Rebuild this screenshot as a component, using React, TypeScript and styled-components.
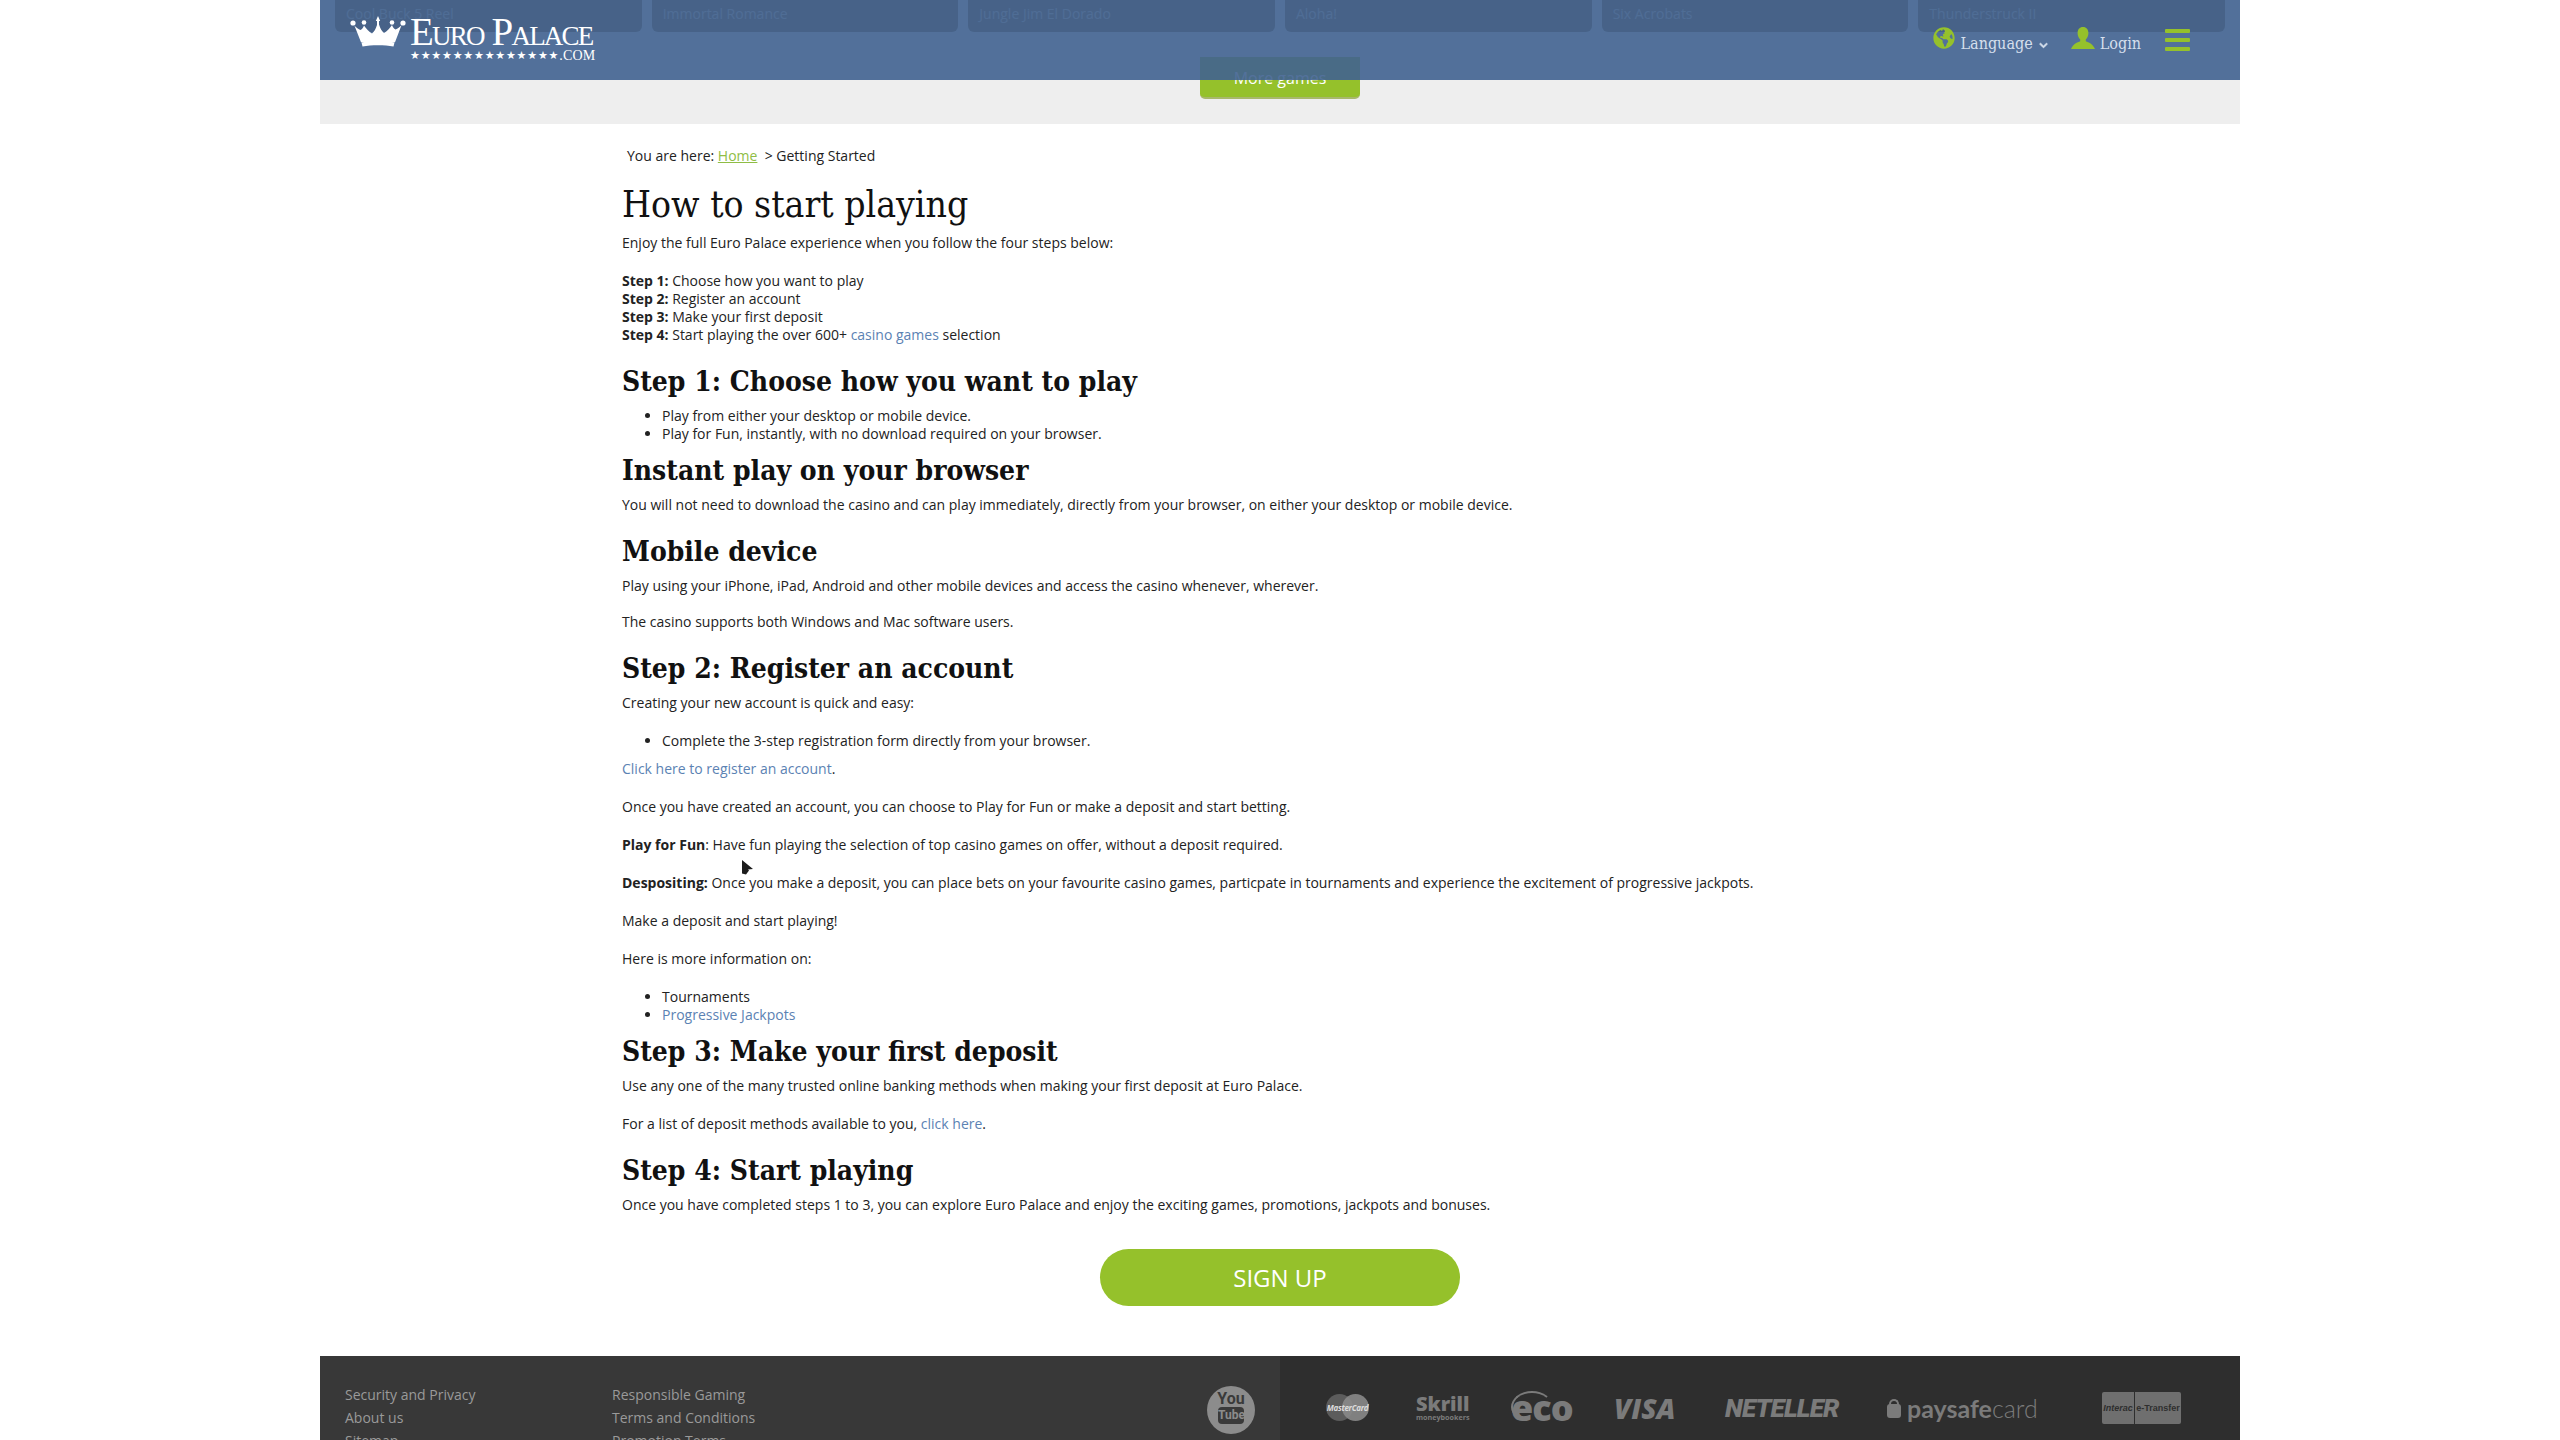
import styled, { createGlobalStyle } from "styled-components";
import { FaGlobeAmericas, FaChevronDown } from "react-icons/fa";

const GREEN = "#95c12b";
const SANS = `"Open Sans", "Noto Sans", sans-serif`;
const SLAB = `"DejaVu Serif Condensed", "DejaVu Serif", "Liberation Serif", serif`;

const games = [
  "Cool Buck 5 Reel",
  "Immortal Romance",
  "Jungle Jim El Dorado",
  "Aloha!",
  "Six Acrobats",
  "Thunderstruck II",
];

function Crown() {
  return (
    <svg width="56" height="31" viewBox="0 0 56 31" fill="#fff">
      <path d="M28 0l2.2 5H29v3.5c1.2 4 3 7 5 8.5 3-1.6 6-5 8-8 .8 2 1.8 3.6 3.5 4.5 2.2-.6 4.2-2.4 6-4.2l-6.5 17H11L4.500 9.800c1.800 1.800 3.800 3.600 6 4.200 1.700-.9 2.700-2.500 3.500-4.500 2 3 5 6.400 8 8 2-1.500 3.800-4.500 5-8.500V5h-1.200z" />
      <circle cx="3" cy="7" r="2.600" />
      <circle cx="53" cy="7" r="2.600" />
      <circle cx="14" cy="6.500" r="2.300" />
      <circle cx="42" cy="6.500" r="2.300" />
      <path d="M11.500 26.500c10-2.500 23-2.500 33 0L43.500 30.500c-9-1.800-22-1.800-31 0z" />
    </svg>
  );
}

function UserIcon() {
  return (
    <svg width="24" height="22" viewBox="0 0 24 22" fill={GREEN}>
      <path d="M12 0c3.400 0 5.400 2.600 5.400 6 0 2.700-1.100 5-2.600 6.400v1.800c2.800 1.200 7 2.500 9.200 7.800H0c2.200-5.300 6.400-6.600 9.200-7.800v-1.800C7.700 11 6.600 8.700 6.600 6 6.600 2.600 8.600 0 12 0z" />
    </svg>
  );
}

function Cursor() {
  return (
    <svg width="13" height="16" viewBox="0 0 13 16" fill="#1c1c1c">
      <path d="M1 0l11 9-5 .5 1 1-3 4-4-1z" />
    </svg>
  );
}

export default function App() {
  return (
    <>
      <GlobalStyle />
      <Page>
        <TopArea>
          <GameRow>
            {games.map(g => (
              <GameCard key={g}>{g}</GameCard>
            ))}
          </GameRow>
          <MoreButton>More games</MoreButton>
        </TopArea>

        <Header>
          <Logo>
            <Crown />
            <LogoText>
              <LogoName>Euro Palace</LogoName>
              <LogoLine>
                <LogoStars>★★★★★★★★★★★★★★</LogoStars>
                <LogoCom>.COM</LogoCom>
              </LogoLine>
            </LogoText>
          </Logo>
          <HeaderMenu>
            <MenuItem>
              <FaGlobeAmericas size={22} color={GREEN} />
              <MenuLabel>Language</MenuLabel>
              <FaChevronDown size={9} color="#d5dfec" stroke="#d5dfec" strokeWidth={40} />
            </MenuItem>
            <MenuItem>
              <UserIcon />
              <MenuLabel>Login</MenuLabel>
            </MenuItem>
            <Burger>
              <span />
              <span />
              <span />
            </Burger>
          </HeaderMenu>
        </Header>

        <Main>
          <Crumbs>
            You are here: <HomeLink>Home</HomeLink>&nbsp; &gt; Getting Started
          </Crumbs>
          <Title>How to start playing</Title>
          <Text>Enjoy the full Euro Palace experience when you follow the four steps below:</Text>
          <Text>
            <b>Step 1:</b> Choose how you want to play
            <br />
            <b>Step 2:</b> Register an account
            <br />
            <b>Step 3:</b> Make your first deposit
            <br />
            <b>Step 4:</b> Start playing the over 600+ <A>casino games</A> selection
          </Text>

          <Heading>Step 1: Choose how you want to play</Heading>
          <List>
            <li>Play from either your desktop or mobile device.</li>
            <li>Play for Fun, instantly, with no download required on your browser.</li>
          </List>

          <Heading>Instant play on your browser</Heading>
          <Text>
            You will not need to download the casino and can play immediately, directly from your browser, on either
            your desktop or mobile device.
          </Text>

          <Heading>Mobile device</Heading>
          <Text $tight>Play using your iPhone, iPad, Android and other mobile devices and access the casino whenever, wherever.</Text>
          <Text>The casino supports both Windows and Mac software users.</Text>

          <Heading>Step 2: Register an account</Heading>
          <Text>Creating your new account is quick and easy:</Text>
          <List>
            <li>Complete the 3-step registration form directly from your browser.</li>
          </List>
          <Text>
            <A>Click here to register an account</A>.
          </Text>
          <Text>Once you have created an account, you can choose to Play for Fun or make a deposit and start betting.</Text>
          <Text>
            <b>Play for Fun</b>: Have fun playing the selection of top casino games on offer, without a deposit required.
          </Text>
          <Text>
            <b>Despositing:</b> Once you make a deposit, you can place bets on your favourite casino games, particpate in
            tournaments and experience the excitement of progressive jackpots.
          </Text>
          <Text>Make a deposit and start playing!</Text>
          <Text>Here is more information on:</Text>
          <List>
            <li>Tournaments</li>
            <li>
              <A>Progressive Jackpots</A>
            </li>
          </List>

          <Heading>Step 3: Make your first deposit</Heading>
          <Text>Use any one of the many trusted online banking methods when making your first deposit at Euro Palace.</Text>
          <Text>
            For a list of deposit methods available to you, <A>click here</A>.
          </Text>

          <Heading>Step 4: Start playing</Heading>
          <Text>Once you have completed steps 1 to 3, you can explore Euro Palace and enjoy the exciting games, promotions, jackpots and bonuses.</Text>

          <SignUpRow>
            <SignUp>SIGN UP</SignUp>
          </SignUpRow>
        </Main>

        <Footer>
          <FooterLinks>
            <span>Security and Privacy</span>
            <span>About us</span>
            <span>Sitemap</span>
          </FooterLinks>
          <FooterLinks>
            <span>Responsible Gaming</span>
            <span>Terms and Conditions</span>
            <span>Promotion Terms</span>
          </FooterLinks>
          <LogoRow>
            <YouTube>
              You
              <YouTubeBox>Tube</YouTubeBox>
            </YouTube>
            <MasterCard>
              <McLeft />
              <McRight />
              <McText>MasterCard</McText>
            </MasterCard>
            <Skrill>
              Skrill
              <small>moneybookers</small>
            </Skrill>
            <Eco>eco</Eco>
            <Visa>VISA</Visa>
            <Neteller>NETELLER</Neteller>
            <Paysafe>
              <Lock />
              paysafe<span>card</span>
            </Paysafe>
            <Interac>
              <InteracLeft>Interac</InteracLeft>
              <InteracRight>e-Transfer</InteracRight>
            </Interac>
          </LogoRow>
        </Footer>

        <CursorSpot>
          <Cursor />
        </CursorSpot>
      </Page>
    </>
  );
}

const GlobalStyle = createGlobalStyle`
  html, body {
    margin: 0;
    height: 100%;
    overflow: hidden;
    background: #fff;
  }
`;

const Page = styled.div`
  position: relative;
  width: 1920px;
  height: 1440px;
  margin: 0 auto;
  overflow: hidden;
  font-family: ${SANS};
  font-size: 14px;
  line-height: 18px;
  color: #222;
`;

const TopArea = styled.div`
  height: 124px;
  background: #eeeeee;
`;

const GameRow = styled.div`
  display: grid;
  grid-template-columns: repeat(6, 1fr);
  gap: 10px;
  padding: 0 15px;
`;

const GameCard = styled.div`
  height: 32px;
  padding: 5px 11px 0;
  box-sizing: border-box;
  background: rgb(128, 108, 68);
  border-radius: 0 0 6px 6px;
  color: rgba(255, 255, 255, 0.7);
  font-size: 14px;
`;

const MoreButton = styled.div`
  width: 160px;
  height: 42px;
  margin: 25px auto 0;
  padding-top: 11px;
  box-sizing: border-box;
  background: ${GREEN};
  border-bottom: 2px solid #a8b86c;
  border-radius: 0 0 5px 5px;
  color: #fff;
  font-size: 16px;
  line-height: 20px;
  text-align: center;
`;

const Header = styled.header`
  position: absolute;
  top: 0;
  left: 0;
  right: 0;
  height: 80px;
  display: flex;
  justify-content: space-between;
  background: rgba(64, 98, 144, 0.9);
`;

const Logo = styled.div`
  display: flex;
  align-items: flex-start;
  gap: 4px;
  padding: 16px 0 0 30px;
`;

const LogoText = styled.div`
  display: flex;
  flex-direction: column;
  color: #fff;
  font-family: "Liberation Serif", serif;
`;

const LogoName = styled.div`
  margin-top: -1px;
  font-size: 39px;
  line-height: 33px;
  font-variant: small-caps;
  letter-spacing: -1.800px;
  white-space: nowrap;
`;

const LogoLine = styled.div`
  display: flex;
  align-items: center;
  margin-top: 2px;
`;

const LogoStars = styled.span`
  font-family: "DejaVu Sans", sans-serif;
  font-size: 11px;
  line-height: 12px;
  letter-spacing: 0.800px;
  white-space: nowrap;
`;

const LogoCom = styled.span`
  font-size: 14px;
  line-height: 12px;
  letter-spacing: 0.200px;
`;

const HeaderMenu = styled.div`
  display: flex;
  align-items: flex-start;
  padding: 27px 50px 0 0;
`;

const MenuItem = styled.div`
  display: flex;
  align-items: flex-start;
  margin-right: 23px;
  svg:last-child:not(:first-child) {
    margin: 14px 0 0 6px;
  }
`;

const MenuLabel = styled.span`
  margin: 8px 0 0 5px;
  font-family: ${SLAB};
  font-size: 16px;
  line-height: 18px;
  color: #d5dfec;
`;

const Burger = styled.div`
  display: flex;
  flex-direction: column;
  gap: 5px;
  margin: 2px 0 0 1px;
  span {
    width: 25px;
    height: 4px;
    background: ${GREEN};
    border-radius: 1px;
  }
`;

const Main = styled.main`
  padding: 23px 0 0 302px;
`;

const Crumbs = styled.div`
  padding-left: 5px;
  margin-bottom: 18px;
`;

const HomeLink = styled.a`
  color: #8fbd45;
  text-decoration: underline;
`;

const A = styled.a`
  color: #5b82b3;
`;

const Title = styled.h1`
  margin: 0 0 7px;
  font-family: ${SLAB};
  font-size: 37px;
  font-weight: 400;
  line-height: 44px;
  color: #111;
`;

const Heading = styled.h2`
  margin: 0 0 7px;
  font-family: ${SLAB};
  font-size: 28px;
  font-weight: 700;
  line-height: 36px;
  color: #111;
`;

const Text = styled.p<{ $tight?: boolean }>`
  margin: 0 0 ${p => (p.$tight ? 18 : 20)}px;
`;

const List = styled.ul`
  margin: 0 0 10px;
  padding-left: 40px;
`;

const SignUpRow = styled.div`
  display: flex;
  justify-content: center;
  padding: 15px 302px 0 0;
`;

const SignUp = styled.div`
  width: 360px;
  height: 57px;
  border-radius: 29px;
  background: ${GREEN};
  color: #fff;
  font-size: 24px;
  line-height: 57px;
  text-align: center;
`;

const Footer = styled.footer`
  position: absolute;
  top: 1356px;
  left: 0;
  right: 0;
  height: 84px;
  display: flex;
  padding-left: 25px;
  background: linear-gradient(90deg, #383838 50%, #2e2e2e 50%);
`;

const FooterLinks = styled.div`
  display: flex;
  flex-direction: column;
  gap: 5px;
  width: 267px;
  padding-top: 30px;
  color: #9a9a9a;
  white-space: nowrap;
`;

const LogoRow = styled.div`
  display: flex;
  align-items: center;
  gap: 45px;
  height: 48px;
  margin: 28px 0 0 328px;
  color: #7b7b7b;
`;

const YouTube = styled.div`
  width: 48px;
  height: 48px;
  margin: 4px 26px 0 0;
  padding-top: 4px;
  box-sizing: border-box;
  border-radius: 50%;
  background: #8c8c8c;
  color: #3a3a3a;
  font-family: "Roboto", sans-serif;
  font-size: 16px;
  font-weight: 700;
  line-height: 17px;
  text-align: center;
`;

const YouTubeBox = styled.div`
  width: 26px;
  margin: 0 auto;
  border-radius: 4px;
  background: #3a3a3a;
  color: #8c8c8c;
  font-size: 12px;
`;

const MasterCard = styled.div`
  position: relative;
  width: 43px;
  height: 28px;
`;

const McLeft = styled.div`
  position: absolute;
  left: 0;
  top: 0;
  width: 27px;
  height: 27px;
  border-radius: 50%;
  background: #5c5c5c;
`;

const McRight = styled.div`
  position: absolute;
  right: 0;
  top: 0;
  width: 27px;
  height: 27px;
  border-radius: 50%;
  background: #8a8a8a;
  opacity: 0.9;
`;

const McText = styled.div`
  position: absolute;
  left: 0;
  top: 5px;
  width: 43px;
  color: #ddd;
  font-size: 8px;
  font-style: italic;
  font-weight: 700;
  text-align: center;
  letter-spacing: -0.300px;
`;

const Skrill = styled.div`
  width: 50px;
  margin-left: 2px;
  margin-right: -2px;
  font-size: 20px;
  font-weight: 800;
  line-height: 18px;
  small {
    display: block;
    font-size: 7.200px;
    line-height: 8px;
    font-weight: 700;
    white-space: nowrap;
  }
`;

const Eco = styled.div`
  position: relative;
  width: 60px;
  margin-left: 2px;
  margin-right: -2px;
  font-size: 36px;
  font-weight: 800;
  line-height: 28px;
  letter-spacing: -1px;
  &::before {
    content: "";
    position: absolute;
    left: 0;
    top: -3px;
    width: 38px;
    height: 28px;
    border: 2px solid transparent;
    border-top-color: #7b7b7b;
    border-left-color: #7b7b7b;
    border-radius: 50%;
  }
`;

const Visa = styled.div`
  width: 64px;
  font-size: 28px;
  font-style: italic;
  font-weight: 800;
  line-height: 24px;
`;

const Neteller = styled.div`
  width: 117px;
  margin-left: 2px;
  margin-right: -2px;
  font-family: "Roboto", sans-serif;
  font-size: 26px;
  font-style: italic;
  font-weight: 900;
  line-height: 24px;
  letter-spacing: -0.800px;
  white-space: nowrap;
`;

const Paysafe = styled.div`
  display: flex;
  align-items: center;
  width: 145px;
  margin-left: 2px;
  margin-right: -2px;
  font-family: "Lato", sans-serif;
  font-size: 25px;
  font-weight: 700;
  line-height: 28px;
  span {
    font-weight: 300;
  }
`;

const Lock = styled.div`
  position: relative;
  flex: none;
  width: 14px;
  height: 14px;
  margin: 5px 6px 0 0;
  background: #7b7b7b;
  border-radius: 3px;
  &::before {
    content: "";
    position: absolute;
    left: 2px;
    top: -5px;
    width: 6px;
    height: 6px;
    border: 2px solid #7b7b7b;
    border-bottom: 0;
    border-radius: 5px 5px 0 0;
  }
`;

const Interac = styled.div`
  display: flex;
  width: 79px;
  height: 32px;
  margin-left: 27px;
  border-radius: 2px;
  background: #6f6f6f;
  color: #2e2e2e;
  font-family: "Liberation Sans", sans-serif;
  font-size: 9px;
  font-weight: 700;
  line-height: 32px;
`;

const InteracLeft = styled.div`
  width: 32px;
  border-right: 1px solid #2e2e2e;
  font-style: italic;
  text-align: center;
  white-space: nowrap;
`;

const InteracRight = styled.div`
  flex: 1;
  text-align: center;
  white-space: nowrap;
`;

const CursorSpot = styled.div`
  position: absolute;
  left: 421px;
  top: 860px;
`;
